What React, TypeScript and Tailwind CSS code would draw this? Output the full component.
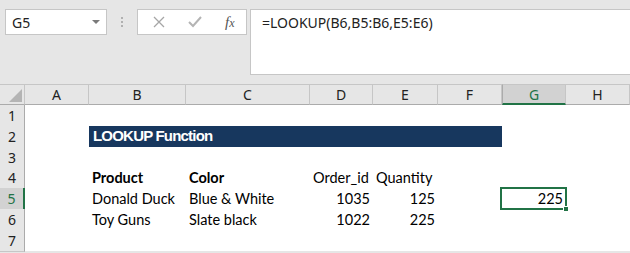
const cols = ["A", "B", "C", "D", "E", "F", "G", "H"];
const rowHeights = ["h-[21px]", "h-[21px]", "h-[20px]", "h-[21px]", "h-[21px]", "h-[21px]", "h-[21px]"];

const ui = { fontFamily: '"Noto Sans", "Open Sans", sans-serif' };
const cellFont = { fontFamily: 'Lato, "Noto Sans", sans-serif' };

function RowHeader({ n, active }: { n: number; active?: boolean }) {
  return (
    <div
      className={
        "flex items-center justify-center border-b border-[#c6c6c6] text-[14px] " +
        (active
          ? "bg-[#d2d2d2] text-[#217346] border-r-2 border-r-[#217346]"
          : "bg-[#e6e6e6] text-[#222] border-r border-r-[#ababab]")
      }
      style={ui}
    >
      {n}
    </div>
  );
}

function Cell({ children, right, bold }: { children?: React.ReactNode; right?: boolean; bold?: boolean }) {
  return (
    <div
      className={
        "flex items-end pb-[2px] px-[3px] bg-white text-[14.5px] text-black whitespace-nowrap " +
        (right ? "justify-end " : "") +
        (bold ? "font-bold" : "")
      }
      style={cellFont}
    >
      {children}
    </div>
  );
}

export default function App() {
  const rows: React.ReactNode[][] = [
    [],
    [],
    [],
    [
      <Cell key="b" bold>Product</Cell>,
      <Cell key="c" bold>Color</Cell>,
      <Cell key="d">Order_id</Cell>,
      <Cell key="e">Quantity</Cell>,
    ],
    [
      <Cell key="b">Donald Duck</Cell>,
      <Cell key="c">Blue &amp; White</Cell>,
      <Cell key="d" right>1035</Cell>,
      <Cell key="e" right>125</Cell>,
    ],
    [
      <Cell key="b">Toy Guns</Cell>,
      <Cell key="c">Slate black</Cell>,
      <Cell key="d" right>1022</Cell>,
      <Cell key="e" right>225</Cell>,
    ],
    [],
  ];

  return (
    <div className="w-[630px] h-[253px] overflow-hidden bg-[#e6e6e6]" style={ui}>
      {/* formula toolbar */}
      <div className="h-[84px] flex items-start pt-[9px] pl-[5px]">
        <div className="w-[102px] h-[26px] bg-white border border-[#c6c6c6] flex items-center justify-between pl-[6px] pr-[4px] text-[14px] text-[#222]">
          <span>G5</span>
          <svg width="10" height="6" viewBox="0 0 10 6" className="mr-[1px]">
            <path d="M1 1h8L5 5z" fill="#7a7a7a" />
          </svg>
        </div>
        <div className="w-[30px] h-[26px] flex flex-col items-center justify-center gap-[2px]">
          <span className="w-[2px] h-[2px] bg-[#b0b0b0]" />
          <span className="w-[2px] h-[2px] bg-[#b0b0b0]" />
          <span className="w-[2px] h-[2px] bg-[#b0b0b0]" />
        </div>
        <div className="w-[110px] h-[26px] bg-white border border-[#c6c6c6] flex items-center">
          <svg width="12" height="12" viewBox="0 0 12 12" className="ml-[15px]">
            <path d="M1 1l10 10M11 1L1 11" stroke="#a6a6a6" strokeWidth="1.3" />
          </svg>
          <svg width="14" height="12" viewBox="0 0 14 12" className="ml-[23px]">
            <path d="M1 6l4 4 8-9" stroke="#b4b4b4" strokeWidth="2" fill="none" />
          </svg>
          <span
            className="ml-[23px] text-[15px] italic text-[#555]"
            style={{ fontFamily: '"Liberation Serif", serif' }}
          >
            f<span className="text-[12px]">x</span>
          </span>
        </div>
        <div className="ml-[3px] flex-1 h-[66px] bg-white border border-[#c6c6c6] border-r-0 pl-[11px] pt-[2px] text-[14px] text-[#222]">
          =LOOKUP(B6,B5:B6,E5:E6)
        </div>
      </div>

      {/* sheet */}
      <div className="grid grid-cols-[25px_64px_97px_124px_63px_65px_64px_64px_64px]">
        {/* column headers */}
        <div className="h-[21px] border-t border-[#c6c6c6] border-b border-b-[#ababab] border-r border-r-[#c6c6c6] flex items-end justify-end p-[2px]">
          <svg width="13" height="13" viewBox="0 0 13 13">
            <path d="M13 0V13H0z" fill="#b4b4b4" />
          </svg>
        </div>
        {cols.map((c) => (
          <div
            key={c}
            className={
              "h-[21px] flex items-center justify-center text-[14px] border-t border-[#c6c6c6] border-r border-r-[#c6c6c6] " +
              (c === "G"
                ? "bg-[#d2d2d2] text-[#217346] border-b-2 border-b-[#217346] border-l border-l-[#ababab]"
                : "text-[#222] border-b border-b-[#ababab]")
            }
          >
            {c}
          </div>
        ))}

        {rows.map((cells, i) => {
          const n = i + 1;
          const h = rowHeights[i];
          return (
            <div key={n} className="contents">
              <div className={h + " grid"}>
                <RowHeader n={n} active={n === 5} />
              </div>
              <div className={h + " bg-white"} />
              {n === 2 ? (
                <div
                  className={h + " col-span-5 bg-[#17375e] text-white font-bold text-[15px] tracking-[-0.8px] flex items-center pl-[4px]"}
                  style={{ fontFamily: '"Liberation Sans", Arial, sans-serif' }}
                >
                  LOOKUP Function
                </div>
              ) : cells.length ? (
                <>
                  {cells.map((c, k) => (
                    <div key={k} className={h + " grid"}>
                      {c}
                    </div>
                  ))}
                  <div className={h + " bg-white"} />
                </>
              ) : (
                <>
                  <div className={h + " bg-white"} />
                  <div className={h + " bg-white"} />
                  <div className={h + " bg-white"} />
                  <div className={h + " bg-white"} />
                  <div className={h + " bg-white"} />
                </>
              )}
              {n === 5 ? (
                <div className={h + " relative grid"}>
                  <Cell right>225</Cell>
                  <div className="absolute -left-[2px] -top-[1px] -right-[1px] -bottom-[1px] border-2 border-[#217346]" />
                  <div className="absolute -right-[3px] -bottom-[3px] w-[6px] h-[6px] bg-[#217346] border border-white" />
                </div>
              ) : (
                <div className={h + " bg-white"} />
              )}
              <div className={h + " bg-white"} />
            </div>
          );
        })}
      </div>
    </div>
  );
}
